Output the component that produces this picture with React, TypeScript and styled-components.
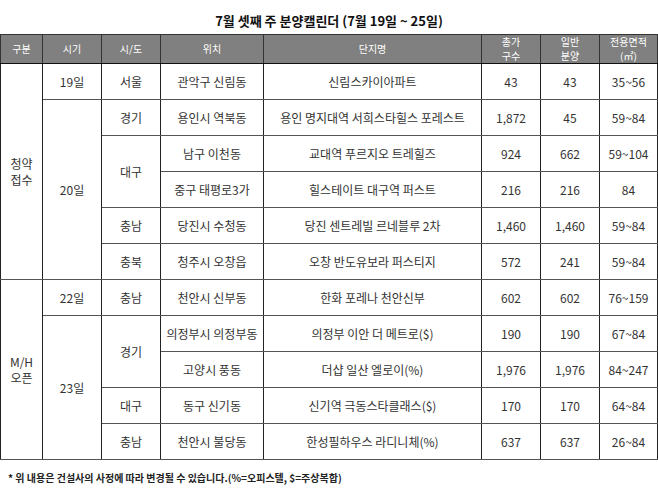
import styled, { createGlobalStyle } from "styled-components";

const GlobalStyle = createGlobalStyle`
  html, body {
    margin: 0;
    padding: 0;
    background: #ffffff;
  }
  body {
    font-family: "Noto Sans CJK KR", "Liberation Sans", sans-serif;
    color: #222;
  }
`;

type Sep = "strong" | "normal" | "light";

const sepColor: Record<Sep, string> = {
  strong: "#111",
  normal: "#555",
  light: "#b0b0b0",
};

const Page = styled.div`
  width: 658px;
  height: 489px;
  overflow: hidden;
`;

const Title = styled.h1`
  margin: 0;
  height: 34px;
  padding-top: 12px;
  box-sizing: border-box;
  font-size: 13px;
  line-height: 18px;
  font-weight: 700;
  text-align: center;
  color: #111;
`;

const Table = styled.table`
  width: 657px;
  border-collapse: collapse;
  table-layout: fixed;
  border: 1px solid #111;
`;

const HeadCell = styled.th`
  height: 28px;
  padding: 0;
  background: #808080;
  color: #fff;
  font-size: 10px;
  line-height: 14px;
  font-weight: 400;
  text-align: center;
  border: 1px solid #333;
  border-bottom: 1px solid #111;
`;

const Row = styled.tr<{ $sep: Sep }>`
  height: 36px;
  & > td {
    border-top: 1px solid ${(p) => sepColor[p.$sep]};
  }
`;

const Cell = styled.td<{ $soft?: boolean }>`
  padding: 0;
  font-size: 12px;
  line-height: 16px;
  color: #333;
  text-align: center;
  vertical-align: middle;
  white-space: nowrap;
  border-left: 1px solid ${(p) => (p.$soft ? "#777" : "#222")};
  border-right: 1px solid #222;
  border-bottom: 1px solid #555;
`;

const Note = styled.p`
  margin: 0;
  padding: 11px 0 0 8px;
  font-size: 10px;
  line-height: 14px;
  font-weight: 700;
  color: #222;
`;

type Span = { text: string; span: number };

type Item = {
  sep: Sep;
  group?: Span;
  date?: Span;
  region?: Span;
  loc: string;
  name: string;
  total: string;
  general: string;
  area: string;
};

const rows: Item[] = [
  { sep: "strong", group: { text: "청약\n접수", span: 6 }, date: { text: "19일", span: 1 }, region: { text: "서울", span: 1 }, loc: "관악구 신림동", name: "신림스카이아파트", total: "43", general: "43", area: "35~56" },
  { sep: "normal", date: { text: "20일", span: 5 }, region: { text: "경기", span: 1 }, loc: "용인시 역북동", name: "용인 명지대역 서희스타힐스 포레스트", total: "1,872", general: "45", area: "59~84" },
  { sep: "strong", region: { text: "대구", span: 2 }, loc: "남구 이천동", name: "교대역 푸르지오 트레힐즈", total: "924", general: "662", area: "59~104" },
  { sep: "light", loc: "중구 태평로3가", name: "힐스테이트 대구역 퍼스트", total: "216", general: "216", area: "84" },
  { sep: "strong", region: { text: "충남", span: 1 }, loc: "당진시 수청동", name: "당진 센트레빌 르네블루 2차", total: "1,460", general: "1,460", area: "59~84" },
  { sep: "strong", region: { text: "충북", span: 1 }, loc: "청주시 오창읍", name: "오창 반도유보라 퍼스티지", total: "572", general: "241", area: "59~84" },
  { sep: "strong", group: { text: "M/H\n오픈", span: 5 }, date: { text: "22일", span: 1 }, region: { text: "충남", span: 1 }, loc: "천안시 신부동", name: "한화 포레나 천안신부", total: "602", general: "602", area: "76~159" },
  { sep: "normal", date: { text: "23일", span: 4 }, region: { text: "경기", span: 2 }, loc: "의정부시 의정부동", name: "의정부 이안 더 메트로($)", total: "190", general: "190", area: "67~84" },
  { sep: "light", loc: "고양시 풍동", name: "더샵 일산 엘로이(%)", total: "1,976", general: "1,976", area: "84~247" },
  { sep: "strong", region: { text: "대구", span: 1 }, loc: "동구 신기동", name: "신기역 극동스타클래스($)", total: "170", general: "170", area: "64~84" },
  { sep: "normal", region: { text: "충남", span: 1 }, loc: "천안시 불당동", name: "한성필하우스 라디니체(%)", total: "637", general: "637", area: "26~84" },
];

const widths = [42, 59, 59, 103, 218, 59, 59, 58];

const Lines = ({ text }: { text: string }) => (
  <>
    {text.split("\n").map((line, i) => (
      <div key={i}>{line}</div>
    ))}
  </>
);

const App = () => {
  return (
    <Page>
      <GlobalStyle />
      <Title>7월 셋째 주 분양캘린더 (7월 19일 ~ 25일)</Title>
      <Table>
        <colgroup>
          {widths.map((w, i) => (
            <col key={i} style={{ width: w }} />
          ))}
        </colgroup>
        <thead>
          <tr>
            <HeadCell>구분</HeadCell>
            <HeadCell>시기</HeadCell>
            <HeadCell>시/도</HeadCell>
            <HeadCell>위치</HeadCell>
            <HeadCell>단지명</HeadCell>
            <HeadCell>
              <Lines text={"총가\n구수"} />
            </HeadCell>
            <HeadCell>
              <Lines text={"일반\n분양"} />
            </HeadCell>
            <HeadCell>
              <Lines text={"전용면적\n(㎡)"} />
            </HeadCell>
          </tr>
        </thead>
        <tbody>
          {rows.map((r) => (
            <Row key={r.loc} $sep={r.sep}>
              {r.group && (
                <Cell rowSpan={r.group.span}>
                  <Lines text={r.group.text} />
                </Cell>
              )}
              {r.date && <Cell rowSpan={r.date.span}>{r.date.text}</Cell>}
              {r.region && <Cell rowSpan={r.region.span}>{r.region.text}</Cell>}
              <Cell>{r.loc}</Cell>
              <Cell>{r.name}</Cell>
              <Cell>{r.total}</Cell>
              <Cell $soft>{r.general}</Cell>
              <Cell>{r.area}</Cell>
            </Row>
          ))}
        </tbody>
      </Table>
      <Note>* 위 내용은 건설사의 사정에 따라 변경될 수 있습니다.(%=오피스텔, $=주상복합)</Note>
    </Page>
  );
};

export default App;
